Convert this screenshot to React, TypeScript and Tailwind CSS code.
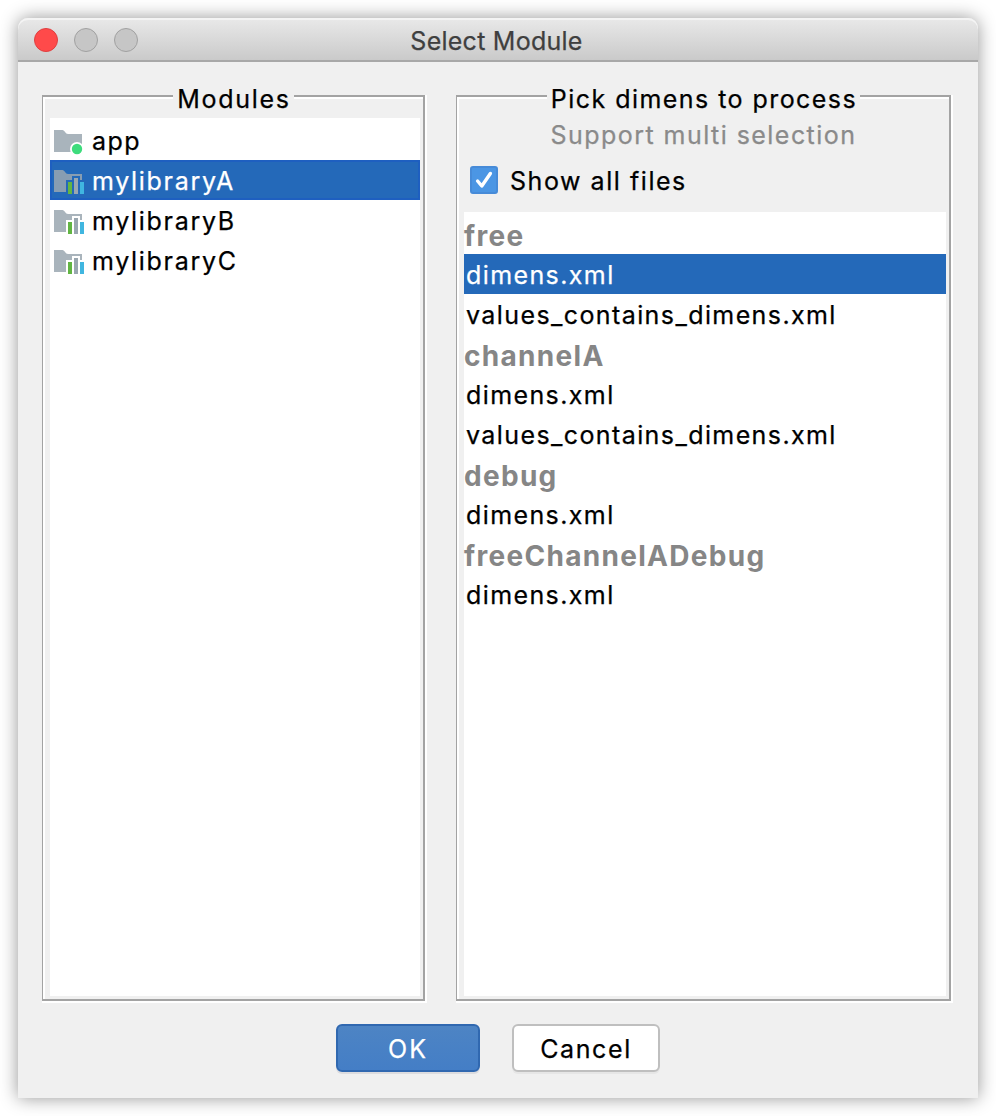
import type { ReactNode } from "react";

type ModuleItem = { name: string; kind: "app" | "library"; selected?: boolean };
type FileRow = { text: string; header?: boolean; selected?: boolean };

const modules: ModuleItem[] = [
  { name: "app", kind: "app" },
  { name: "mylibraryA", kind: "library", selected: true },
  { name: "mylibraryB", kind: "library" },
  { name: "mylibraryC", kind: "library" },
];

const files: FileRow[] = [
  { text: "free", header: true },
  { text: "dimens.xml", selected: true },
  { text: "values_contains_dimens.xml" },
  { text: "channelA", header: true },
  { text: "dimens.xml" },
  { text: "values_contains_dimens.xml" },
  { text: "debug", header: true },
  { text: "dimens.xml" },
  { text: "freeChannelADebug", header: true },
  { text: "dimens.xml" },
];

function ModuleIcon({ kind }: { kind: ModuleItem["kind"] }) {
  return (
    <svg width="32" height="26" viewBox="0 0 32 26" className="mt-1.5 shrink-0">
      {kind === "app" ? (
        <>
          <path d="M0 0H8.5C10.5 0 11.5 4 14 4H28V22H0Z" fill="#9aa7b0" fillOpacity="0.85" />
          <circle cx="23" cy="19" r="7" fill="#fff" />
          <circle cx="23" cy="19" r="5.2" fill="#3ddc7c" />
        </>
      ) : (
        <>
          <path d="M0 0H8.5C10.5 0 11.5 4 14 4H28V10H26V6H18V10H12V22H0Z" fill="#9aa7b0" fillOpacity="0.85" />
          <rect x="14" y="12" width="4" height="12" fill="#62b543" />
          <rect x="20" y="8" width="4" height="16" fill="#9aa7b0" />
          <rect x="26" y="12" width="4" height="12" fill="#40b6e0" />
        </>
      )}
    </svg>
  );
}

function Group({ title, className, children }: { title: string; className: string; children: ReactNode }) {
  return (
    <section className={`h-[908px] border-r-2 border-b-2 border-white ${className}`}>
      <div className="flex h-full flex-col border-t-2 border-r-2 border-b-2 border-l border-[#a3a3a3] shadow-[inset_2px_2px_0_#fff]">
        <h2 className="-mt-[14px] ml-px flex h-8 shrink-0 items-center self-center bg-[#f0f0f0] pr-[3px] pl-1">
          {title}
        </h2>
        {children}
      </div>
    </section>
  );
}

export default function App() {
  return (
    <div className="h-[1116px] w-[996px] overflow-hidden bg-white p-[18px] font-['Inter','Liberation_Sans',sans-serif] text-[25px] leading-8 whitespace-nowrap text-black [-webkit-text-stroke:0.25px]">
      <main className="h-[1080px] w-[960px] rounded-t-[10px] bg-[#f0f0f0] shadow-[0_0_18px_rgba(0,0,0,0.42)]">
        <header className="flex h-11 items-center rounded-t-[10px] border-b-2 border-[#a8a8a8] bg-linear-to-b from-[#e9e9e9] to-[#cacaca] px-4 shadow-[inset_0_2px_0_#f4f4f4]">
          <div className="flex w-[300px] gap-4 pt-0.5">
            <span className="size-6 rounded-full border border-[#df3f40] bg-[#ff4a4a]" />
            <span className="size-6 rounded-full border border-[#a1a1a1] bg-[#c6c6c6]" />
            <span className="size-6 rounded-full border border-[#a1a1a1] bg-[#c6c6c6]" />
          </div>
          <h1 className="flex-1 pt-[3px] pr-[3px] text-center tracking-[0.25px] text-[#3f3f3f]">Select Module</h1>
          <div className="w-[300px]" />
        </header>

        <div className="flex justify-between pt-[33px] pr-[25px] pl-6">
          <Group title="Modules" className="w-[385px] tracking-[1.7px]">
            <ul className="mt-[3px] mr-[3px] mb-[3px] ml-[7px] flex-1 bg-white pt-0.5">
              {modules.map((m) => (
                <li
                  key={m.name}
                  className={`flex h-10 items-center pl-1 ${
                    m.selected ? "bg-[#2469b9] text-white shadow-[inset_0_0_0_2px_#1e5fc0]" : ""
                  }`}
                >
                  <ModuleIcon kind={m.kind} />
                  <span className={m.kind === "app" ? "ml-1.5 pt-0.5 tracking-[1.4px]" : "ml-1.5 pt-0.5"}>{m.name}</span>
                </li>
              ))}
            </ul>
          </Group>

          <Group title="Pick dimens to process" className="w-[497px] tracking-[1.45px]">
            <p className="ml-px h-9 self-center pt-1 text-[#8a8a8a]">Support multi selection</p>
            <label className="mt-[15px] ml-[13px] flex h-7 items-center tracking-[1.55px]">
              <span className="flex size-7 items-center justify-center rounded-[3px] border-2 border-[#478bd8] bg-[#4b96e4]">
                <svg width="20" height="20" viewBox="0 0 20 20" fill="none">
                  <path d="M3.6 11L7.8 16L16.4 3.5" stroke="#fff" strokeWidth="3.4" strokeLinecap="round" strokeLinejoin="round" />
                </svg>
              </span>
              <span className="ml-3 pt-0.5">Show all files</span>
            </label>
            <ul className="mt-[18px] mr-[3px] mb-[3px] ml-[7px] flex-1 bg-white pt-0.5">
              {files.map((f, i) => (
                <li
                  key={i}
                  className={`flex h-10 items-center ${
                    f.header
                      ? "pt-1 text-[28px] font-bold tracking-[1.3px] text-[#868686] [-webkit-text-stroke:0px]"
                      : "pt-0.5 pl-0.5 tracking-[1.4px]"
                  } ${f.selected ? "bg-[#2469b9] text-white" : ""}`}
                >
                  {f.text}
                </li>
              ))}
            </ul>
          </Group>
        </div>

        <footer className="mt-[21px] flex gap-8 pl-[318px]">
          <button className="h-12 w-36 rounded-[6px] border-2 border-[#3068b0] bg-linear-to-b from-[#4d84c4] to-[#447ec6] pt-0.5 tracking-[2px] text-white shadow-[0_2px_0_#dcdcdf]">
            OK
          </button>
          <button className="h-12 w-[148px] rounded-[6px] border-2 border-[#bfbfbf] bg-white pt-0.5 tracking-[1.6px] shadow-[0_2px_0_#e6e6e6]">
            Cancel
          </button>
        </footer>
      </main>
    </div>
  );
}
